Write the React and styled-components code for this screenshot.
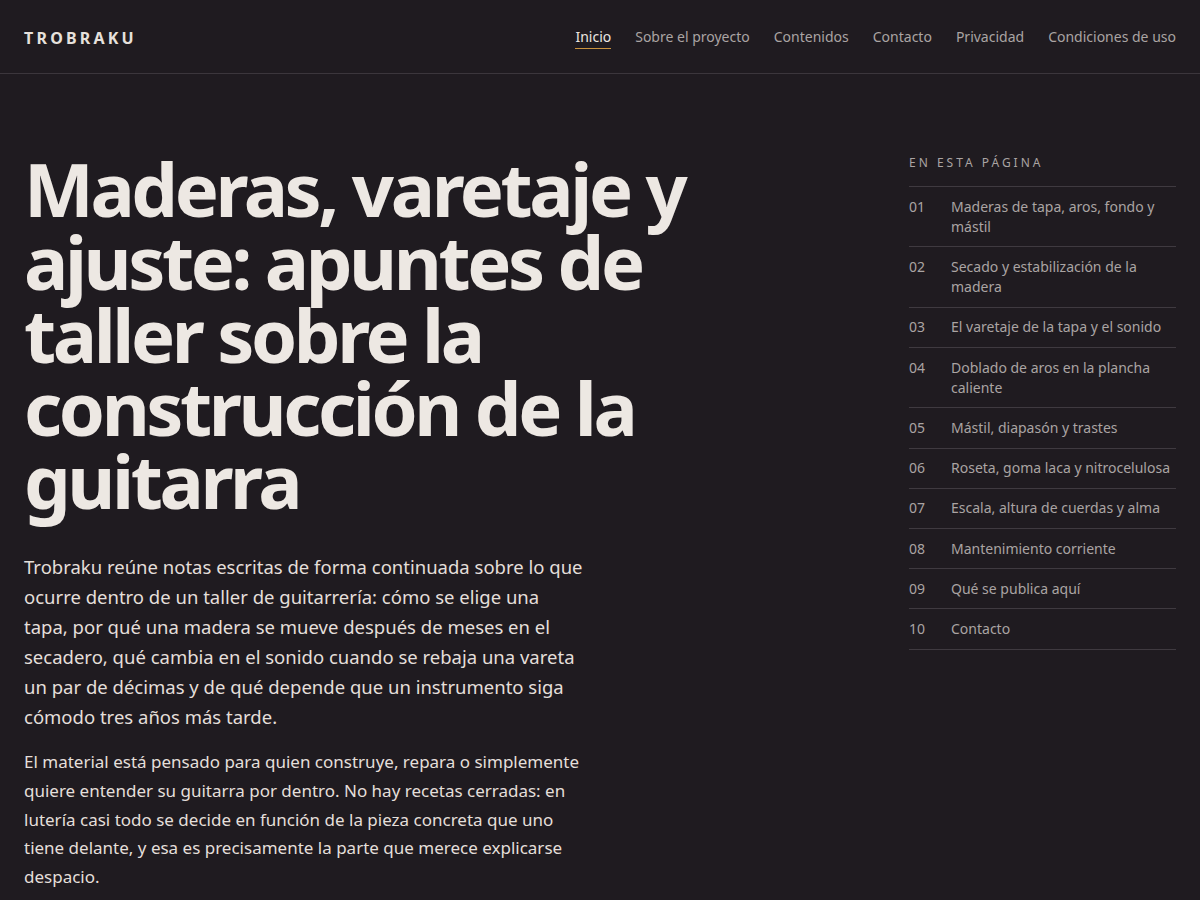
import React from 'react';
import styled, { createGlobalStyle } from 'styled-components';

const GlobalStyle = createGlobalStyle`
  * { box-sizing: border-box; }
  html, body { margin: 0; padding: 0; }
  body {
    background: #1f1b20;
    color: #ece7e2;
    font-family: "Noto Sans", "DejaVu Sans", sans-serif;
  }
  a { color: inherit; text-decoration: none; }
`;

const Header = styled.header`
  height: 74px;
  padding: 2px 24px 0;
  display: flex;
  align-items: center;
  justify-content: space-between;
  border-bottom: 1px solid #3b363c;
`;

const Logo = styled.a`
  font-size: 16px;
  font-weight: 700;
  letter-spacing: 3.2px;
  color: #e6e1dc;
`;

const Nav = styled.nav`
  display: flex;
  gap: 24px;
`;

const NavLink = styled.a`
  font-size: 14px;
  color: ${p => (p.$active ? '#ece7e2' : '#aaa4a3')};
  padding-bottom: 2px;
  border-bottom: 1px solid ${p => (p.$active ? '#c9933f' : 'transparent')};
`;

const Layout = styled.div`
  display: grid;
  grid-template-columns: 1fr 267px;
  gap: 64px;
  padding: 78px 24px 0;
`;

const Main = styled.main`
  max-width: 700px;
`;

const Title = styled.h1`
  margin: 0 0 35px;
  font-size: 74px;
  line-height: 73px;
  font-weight: 700;
  letter-spacing: -3.4px;
  color: #ede8e3;
`;

const Lead = styled.p`
  margin: 0 0 16px;
  max-width: 560px;
  font-size: 18.5px;
  line-height: 30px;
  color: #e4dfda;
`;

const Body = styled.p`
  margin: 0 0 16px;
  max-width: 570px;
  font-size: 17px;
  line-height: 28.8px;
  color: #e4dfda;
`;

const Aside = styled.aside``;

const AsideLabel = styled.div`
  font-size: 12px;
  letter-spacing: 3px;
  color: #aaa4a3;
  padding: 2px 0 15px;
  border-bottom: 1px solid #3f3a40;
`;

const TocList = styled.ol`
  list-style: none;
  margin: 0;
  padding: 0;
`;

const TocItem = styled.li`
  display: grid;
  grid-template-columns: 42px 1fr;
  padding: 9.5px 0;
  border-bottom: 1px solid #3f3a40;
  font-size: 14px;
  line-height: 20.2px;
`;

const TocNum = styled.span`
  color: #aaa4a3;
`;

const TocText = styled.a`
  color: #aaa4a3;
`;

const navItems = ['Inicio', 'Sobre el proyecto', 'Contenidos', 'Contacto', 'Privacidad', 'Condiciones de uso'];

const toc = [
  'Maderas de tapa, aros, fondo y mástil',
  'Secado y estabilización de la madera',
  'El varetaje de la tapa y el sonido',
  'Doblado de aros en la plancha caliente',
  'Mástil, diapasón y trastes',
  'Roseta, goma laca y nitrocelulosa',
  'Escala, altura de cuerdas y alma',
  'Mantenimiento corriente',
  'Qué se publica aquí',
  'Contacto',
];

export default function App() {
  return (
    <>
      <GlobalStyle />
      <Header>
        <Logo href="#">TROBRAKU</Logo>
        <Nav>
          {navItems.map((n, i) => (
            <NavLink key={n} href="#" $active={i === 0}>{n}</NavLink>
          ))}
        </Nav>
      </Header>
      <Layout>
        <Main>
          <Title>Maderas, varetaje y ajuste: apuntes de taller sobre la construcción de la guitarra</Title>
          <Lead>
            Trobraku reúne notas escritas de forma continuada sobre lo que ocurre dentro de un taller de guitarrería: cómo se elige una tapa, por qué una madera se mueve después de meses en el secadero, qué cambia en el sonido cuando se rebaja una vareta un par de décimas y de qué depende que un instrumento siga cómodo tres años más tarde.
          </Lead>
          <Body>
            El material está pensado para quien construye, repara o simplemente quiere entender su guitarra por dentro. No hay recetas cerradas: en lutería casi todo se decide en función de la pieza concreta que uno tiene delante, y esa es precisamente la parte que merece explicarse despacio.
          </Body>
        </Main>
        <Aside>
          <AsideLabel>EN ESTA PÁGINA</AsideLabel>
          <TocList>
            {toc.map((t, i) => (
              <TocItem key={t}>
                <TocNum>{String(i + 1).padStart(2, '0')}</TocNum>
                <TocText href="#">{t}</TocText>
              </TocItem>
            ))}
          </TocList>
        </Aside>
      </Layout>
    </>
  );
}
